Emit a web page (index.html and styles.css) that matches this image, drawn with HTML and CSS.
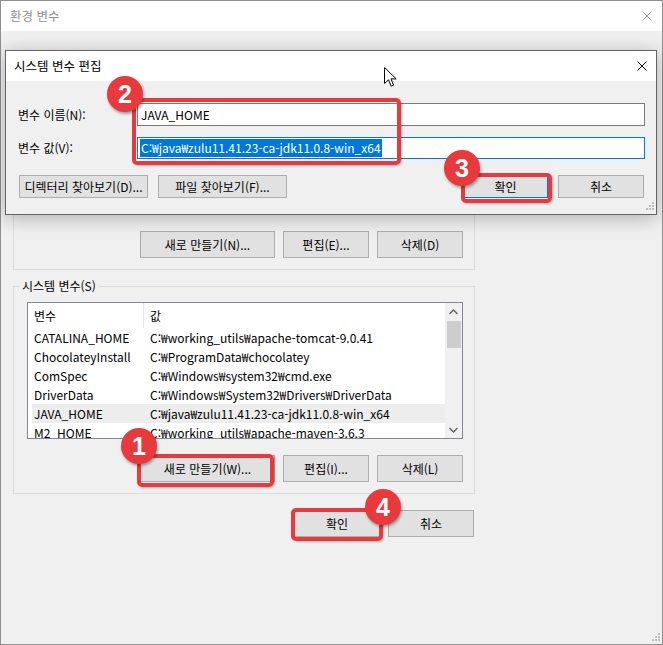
FILE: index.html
```html
<!DOCTYPE html>
<html lang="ko">
<head>
<meta charset="utf-8">
<title>환경 변수</title>
<link rel="stylesheet" href="styles.css">
</head>
<body>
<div class="win">
  <div class="titlebar">
    <span class="title">환경 변수</span>
    <svg class="close" width="10" height="10" viewBox="0 0 10 10"><path d="M0.5 0.5L9.5 9.5M9.5 0.5L0.5 9.5" stroke="#9a9a9a" stroke-width="1"/></svg>
  </div>
  <div class="body">
    <fieldset class="group">
      <legend>사용자 변수(U)</legend>
      <div class="group-body">
        <div class="list user-list">
          <div class="list-main">
            <div class="list-head"><span class="c1">변수</span><span class="c2">값</span></div>
            <div class="row"><span class="c1">OneDrive</span><span class="c2">C:₩Users₩user₩OneDrive</span></div>
            <div class="row"><span class="c1">Path</span><span class="c2">C:₩Users₩user₩AppData₩Local₩Microsoft₩WindowsApps</span></div>
            <div class="row"><span class="c1">TEMP</span><span class="c2">C:₩Users₩user₩AppData₩Local₩Temp</span></div>
            <div class="row"><span class="c1">TMP</span><span class="c2">C:₩Users₩user₩AppData₩Local₩Temp</span></div>
          </div>
        </div>
        <div class="actions">
          <button class="btn w135">새로 만들기(N)...</button>
          <button class="btn w86">편집(E)...</button>
          <button class="btn w86">삭제(D)</button>
        </div>
      </div>
    </fieldset>
    <fieldset class="group sys">
      <legend>시스템 변수(S)</legend>
      <div class="group-body">
        <div class="list sys-list">
          <div class="list-main">
            <div class="list-head"><span class="c1">변수</span><span class="c2">값</span></div>
            <div class="row"><span class="c1">CATALINA_HOME</span><span class="c2">C:₩working_utils₩apache-tomcat-9.0.41</span></div>
            <div class="row"><span class="c1">ChocolateyInstall</span><span class="c2">C:₩ProgramData₩chocolatey</span></div>
            <div class="row"><span class="c1">ComSpec</span><span class="c2">C:₩Windows₩system32₩cmd.exe</span></div>
            <div class="row"><span class="c1">DriverData</span><span class="c2">C:₩Windows₩System32₩Drivers₩DriverData</span></div>
            <div class="row selected"><span class="c1">JAVA_HOME</span><span class="c2">C:₩java₩zulu11.41.23-ca-jdk11.0.8-win_x64</span></div>
            <div class="row"><span class="c1">M2_HOME</span><span class="c2">C:₩working_utils₩apache-maven-3.6.3</span></div>
          </div>
          <div class="scrollbar">
            <div class="sb-arrow"><svg width="9" height="6" viewBox="0 0 9 6"><path d="M0.5 5L4.5 1L8.5 5" fill="none" stroke="#606060" stroke-width="1.4"/></svg></div>
            <div class="sb-track"><div class="sb-thumb"></div></div>
            <div class="sb-arrow"><svg width="9" height="6" viewBox="0 0 9 6"><path d="M0.5 1L4.5 5L8.5 1" fill="none" stroke="#606060" stroke-width="1.4"/></svg></div>
          </div>
        </div>
        <div class="actions">
          <button class="btn w135">새로 만들기(W)...</button>
          <button class="btn w86">편집(I)...</button>
          <button class="btn w86">삭제(L)</button>
        </div>
      </div>
    </fieldset>
    <div class="main-actions">
      <button class="btn w86">확인</button>
      <button class="btn w86">취소</button>
    </div>
  </div>
  <svg class="grip outer-grip" width="10" height="10" viewBox="0 0 10 10" fill="#bdbdbd"><rect x="7" y="0" width="2" height="2"/><rect x="4" y="3" width="2" height="2"/><rect x="7" y="3" width="2" height="2"/><rect x="1" y="6" width="2" height="2"/><rect x="4" y="6" width="2" height="2"/><rect x="7" y="6" width="2" height="2"/></svg>

  <div class="dialog">
    <div class="dlg-title">
      <span>시스템 변수 편집</span>
      <svg width="10" height="10" viewBox="0 0 10 10"><path d="M0.5 0.5L9.5 9.5M9.5 0.5L0.5 9.5" stroke="#000" stroke-width="1"/></svg>
    </div>
    <div class="dlg-body">
      <div class="fields">
        <span class="lbl">변수 이름(N):</span>
        <div class="input">JAVA_HOME</div>
        <span class="lbl">변수 값(V):</span>
        <div class="input focus"><span class="sel">C:₩java₩zulu11.41.23-ca-jdk11.0.8-win_x64</span></div>
      </div>
      <div class="dlg-actions">
        <div class="grp">
          <button class="btn sm w129">디렉터리 찾아보기(D)...</button>
          <button class="btn sm w129">파일 찾아보기(F)...</button>
        </div>
        <div class="grp">
          <button class="btn sm default w85">확인</button>
          <button class="btn sm w86">취소</button>
        </div>
      </div>
    </div>
    <svg class="grip dlg-grip" width="10" height="10" viewBox="0 0 10 10" fill="#bdbdbd"><rect x="7" y="0" width="2" height="2"/><rect x="4" y="3" width="2" height="2"/><rect x="7" y="3" width="2" height="2"/><rect x="1" y="6" width="2" height="2"/><rect x="4" y="6" width="2" height="2"/><rect x="7" y="6" width="2" height="2"/></svg>
  </div>

  <svg class="cursor" width="14" height="21" viewBox="0 0 14 21"><path d="M0.5 0.5L0.5 16.5L4.5 12.8L7.2 19.2L9.6 18.2L7 11.9L12.2 11.9Z" fill="#fff" stroke="#000" stroke-width="1" stroke-linejoin="round"/></svg>

  <div class="mark box2"></div>
  <div class="mark box3"></div>
  <div class="mark box1"></div>
  <div class="mark box4"></div>
  <div class="badge b1">1</div>
  <div class="badge b2">2</div>
  <div class="badge b3">3</div>
  <div class="badge b4">4</div>
</div>
</body>
</html>
```
FILE: styles.css
```css
* { box-sizing: border-box; }
html, body { margin: 0; padding: 0; }
body {
  width: 663px;
  height: 645px;
  overflow: hidden;
  background: #f0f0f0;
  font-family: "Noto Sans CJK KR", "Noto Sans", sans-serif;
  font-size: 12px;
  color: #000;
}
.win {
  position: relative;
  width: 663px;
  height: 645px;
  border: 1px solid #8f8f8f;
  background: #f0f0f0;
  display: flex;
  flex-direction: column;
}
.titlebar {
  flex: none;
  height: 30px;
  background: #fff;
  display: flex;
  align-items: center;
  justify-content: space-between;
  padding: 0 10px 0 9px;
}
.title { color: #8e8e8e; line-height: 16px; font-size: 12.5px; }
.body { padding: 21px 0 0 12px; }

.group {
  margin: 0;
  padding: 0;
  width: 462px;
  min-width: 0;
  border: 1px solid #dcdcdc;
}
.group legend {
  margin-left: 5px;
  padding: 0 3px;
  line-height: 16px;
}
.group.sys { margin-top: 8px; }
.group-body { padding: 8px 11px 11px 13px; }

.list {
  display: flex;
  background: #fff;
  border: 1px solid #828790;
  overflow: hidden;
}
.user-list { height: 139px; }
.sys-list { height: 137px; }
.list-main { flex: 1; overflow: hidden; }
.list-head { height: 25px; display: flex; }
.list-head .c1 {
  width: 116px;
  padding-left: 6px;
  border-right: 1px solid #e5e5e5;
  display: flex;
  align-items: center;
}
.list-head .c2 { padding-left: 6px; display: flex; align-items: center; }
.row {
  height: 19px;
  margin-left: 4px;
  display: flex;
  align-items: center;
  white-space: nowrap;
}
.row .c1 { width: 112px; padding-left: 2px; }
.row .c2 { padding-left: 6px; }
.row.selected { background: #ededed; }

.scrollbar {
  width: 17px;
  background: #f0f0f0;
  display: flex;
  flex-direction: column;
}
.sb-arrow { height: 17px; display: flex; align-items: center; justify-content: center; }
.sb-track { flex: 1; padding: 1px 1px 0 2px; }
.sb-thumb { height: 27px; background: #cdcdcd; }

.actions {
  margin-top: 16px;
  display: flex;
  justify-content: flex-end;
  gap: 8px;
}
.main-actions {
  width: 461px;
  margin-top: 16px;
  display: flex;
  justify-content: flex-end;
  gap: 8px;
}
.btn {
  height: 27px;
  padding: 0;
  background: #e1e1e1;
  border: 1px solid #adadad;
  font: inherit;
  color: #000;
  line-height: 16px;
}
.btn.sm { height: 23px; }
.btn.default { border-color: #0078d7; }
.w135 { width: 135px; }
.w129 { width: 129px; }
.w86 { width: 86px; }
.w85 { width: 85px; }

.grip { position: absolute; }
.outer-grip { right: 1px; bottom: 1px; }
.dlg-grip { right: 1px; bottom: 2px; }

.dialog {
  position: absolute;
  left: 4px;
  top: 49px;
  width: 652px;
  height: 165px;
  background: #f0f0f0;
  border: 1px solid #646464;
  box-shadow: 0 3px 18px rgba(0, 0, 0, 0.28);
}
.dlg-title {
  height: 30px;
  background: #fff;
  display: flex;
  align-items: center;
  justify-content: space-between;
  padding: 0 9px 0 8px;
  line-height: 16px;
}
.dlg-title span { font-size: 12.5px; }
.dlg-body { padding: 22px 11px 0 12px; }
.fields {
  display: grid;
  grid-template-columns: 119px 1fr;
  grid-template-rows: 23px 22px;
  row-gap: 11px;
  align-items: center;
}
.lbl { line-height: 16px; }
.input {
  height: 100%;
  background: #fff;
  border: 1px solid #7a7a7a;
  padding: 0 3px;
  display: flex;
  align-items: center;
  white-space: nowrap;
  overflow: hidden;
}
.input.focus { border-color: #0078d7; padding-left: 2px; }
.sel {
  flex: none;
  background: #0078d7;
  color: #fff;
  line-height: 18px;
  padding: 0 1px;
}
.dlg-actions {
  margin-top: 16px;
  padding-left: 1px;
  padding-right: 1px;
  display: flex;
  justify-content: space-between;
}
.grp { display: flex; gap: 10px; }

.cursor { position: absolute; left: 383px; top: 66px; }

.mark {
  position: absolute;
  border: 4px solid #e63a3e;
  border-radius: 5px;
  box-shadow: 1px 1px 2px rgba(0, 0, 0, 0.25);
}
.box2 { left: 131px; top: 97px; width: 269px; height: 67px; }
.box3 { left: 460px; top: 172px; width: 91px; height: 30px; }
.box1 { left: 136px; top: 453px; width: 137px; height: 33px; }
.box4 { left: 290px; top: 507px; width: 92px; height: 33px; }

.badge {
  position: absolute;
  width: 36px;
  height: 36px;
  border-radius: 50%;
  background: #e8393d;
  color: #fff;
  font-family: "Liberation Sans", Arial, sans-serif;
  font-weight: bold;
  font-size: 25px;
  line-height: 36px;
  text-align: center;
  box-shadow: 1px 2px 3px rgba(0, 0, 0, 0.35);
}
.b1 { left: 120px; top: 427px; }
.b2 { left: 106px; top: 75px; }
.b3 { left: 443px; top: 149px; }
.b4 { left: 364px; top: 488px; }
```
